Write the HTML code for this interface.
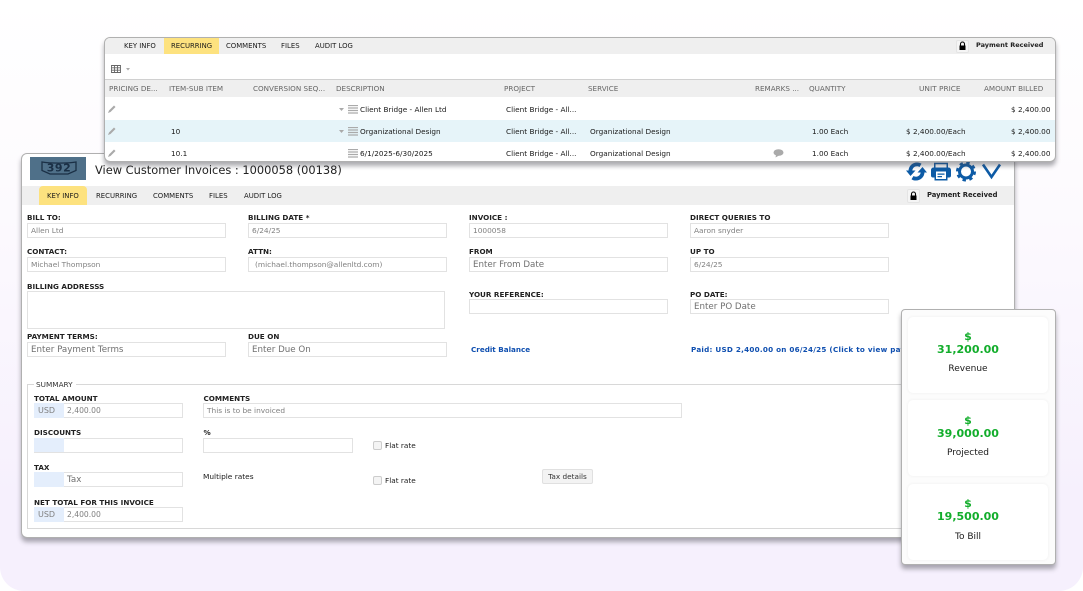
<!DOCTYPE html>
<html><head><meta charset="utf-8"><style>
html,body{margin:0;padding:0;background:#fff}
#r{position:relative;width:1083px;height:591px;overflow:hidden;background:#fff;font-family:"DejaVu Sans","Liberation Sans",sans-serif;font-size:7.3px;color:#1a1a1a}
#bg{position:absolute;left:0;top:0;width:1083px;height:591px;border-radius:0 0 24px 24px;background:linear-gradient(180deg,#fff 0,#fdfbfe 30%,#f6f0fd 85%,#f6f0fd 100%)}
.p{position:absolute;background:#fff;border:1px solid #b0b0b0;box-sizing:border-box;box-shadow:0 4px 5px rgba(70,70,80,.45)}
.a{position:absolute}
.t{position:absolute;white-space:nowrap;line-height:10px}
.tab{font-size:6.9px}
.b{font-weight:bold;font-size:7.2px;color:#222}
.h{color:#666;font-size:7.2px}
.f{position:absolute;box-sizing:border-box;border:1px solid #e2e2e2;background:#fff;height:15px;color:#808080;font-size:7.4px;line-height:14px;padding-left:3px;white-space:nowrap;overflow:hidden}
.f.l{font-size:8.7px;color:#707070}
.u{position:absolute;background:#e4eefc;font-size:8px}
.g{font-weight:bold;color:#12ad2b;font-size:11px;text-align:center;line-height:13px;position:absolute;width:100px}
.c{position:absolute;left:6px;width:140px;height:76px;background:#fff;border-radius:5px;box-shadow:0 0 3px rgba(0,0,0,.06)}
.ck{position:absolute;width:9px;height:9px;box-sizing:border-box;border:1px solid #ccc;border-radius:2px;background:#f4f4f4}
.m{font-size:9px;text-align:center;width:100px;color:#1a1a1a}
</style></head><body><div id="r"><div id="bg"></div>

<!-- invoice panel -->
<div class="p" style="left:21px;top:153px;width:994px;height:385px;border-radius:6px">
<div class="a" style="left:8px;top:3px;width:56px;height:23px;background:#4f7089"></div>
<svg class="a" style="left:19px;top:7px" width="36" height="14" viewBox="0 0 36 14"><path d="M1 1C10 2.500 26 2.500 35 1V9.500L27 13H9L1 9.500Z" fill="none" stroke="#1a2f45" stroke-width="1.300"/><text x="18" y="10.500" font-size="11" font-weight="bold" text-anchor="middle" fill="#1a2f45" font-family="DejaVu Sans" letter-spacing=".5">392</text></svg>
<div class="t" style="left:73px;top:10px;font-size:11.4px;line-height:13px;color:#222">View Customer Invoices : 1000058 (00138)</div>
<div class="a" style="left:0;top:32px;width:992px;height:19px;background:#efefef"></div>
<div class="a" style="left:17px;top:32px;width:48px;height:19px;background:#fde27f;border-radius:4px 4px 0 0"></div>
<div class="t tab" style="left:25px;top:37px">KEY INFO</div>
<div class="t tab" style="left:74px;top:37px">RECURRING</div>
<div class="t tab" style="left:131px;top:37px">COMMENTS</div>
<div class="t tab" style="left:187px;top:37px">FILES</div>
<div class="t tab" style="left:222px;top:37px">AUDIT LOG</div>
<svg class="a" style="left:884px;top:8px" width="100" height="20" viewBox="0 0 100 20">
<g fill="#0d5ba6">
<path id="s" d="M1.500 9C1.500 4 5.500.5 10 .5C12 .5 13.500 1 14.500 1.800L12.500 5C11.500 4.500 10.800 4.300 10 4.300C7.500 4.300 5.700 6 5.300 8.500H8.500L3.500 14 -1 8.500H1.500Z" transform="translate(1 0)"/>
<path d="M1.500 9C1.500 4 5.500.5 10 .5C12 .5 13.500 1 14.500 1.800L12.500 5C11.500 4.500 10.800 4.300 10 4.300C7.500 4.300 5.700 6 5.300 8.500H8.500L3.500 14 -1 8.500H1.500Z" transform="rotate(180 10 9.500)"/>
<path d="M28 5.500V.8H42V5.500H40.500V2.300H29.500V5.500Z"/>
<path d="M27.500 5.500H42.500A2.500 2.500 0 0 1 45 8V13.500A2 2 0 0 1 43 15.500H41.500V18.500H28.500V15.500H27A2 2 0 0 1 25 13.500V8A2.500 2.500 0 0 1 27.500 5.500Z"/>
<path d="M30 9.500H40V17H30Z" fill="#fff"/>
<path d="M31.500 11.500H38.500V12.800H31.500ZM31.500 14H36V15.200H31.500Z"/>
</g>
<circle cx="60" cy="9.500" r="6.500" fill="none" stroke="#0d5ba6" stroke-width="3"/>
<circle cx="60" cy="9.500" r="8.800" fill="none" stroke="#0d5ba6" stroke-width="2.400" stroke-dasharray="3.400 3.510"/>
<path d="M77 2.500L85.500 15 94 2.500" fill="none" stroke="#0d5ba6" stroke-width="2.600"/>
</svg>
<div class="a" style="left:885px;top:35px;width:13px;height:14px;background:#f5f5f5;border:1px solid #e4e4e4;box-sizing:border-box;border-radius:2px"></div>
<svg class="a" style="left:887px;top:37px" width="9" height="10" viewBox="0 0 9 10"><path d="M2.500 4.500V3a2 2 0 0 1 4 0V4.500" fill="none" stroke="#000" stroke-width="1.100"/><rect x="1.500" y="4.500" width="6" height="4.500" fill="#000"/></svg>
<div class="t b" style="left:905px;top:36px;font-size:6.8px">Payment Received</div>

<div class="t b" style="left:5px;top:59px">BILL TO:</div><div class="f" style="left:5px;top:69px;width:199px">Allen Ltd</div>
<div class="t b" style="left:226px;top:59px">BILLING DATE *</div><div class="f" style="left:226px;top:69px;width:199px">6/24/25</div>
<div class="t b" style="left:447px;top:59px">INVOICE :</div><div class="f" style="left:447px;top:69px;width:199px">1000058</div>
<div class="t b" style="left:668px;top:59px">DIRECT QUERIES TO</div><div class="f" style="left:668px;top:69px;width:199px">Aaron snyder</div>

<div class="t b" style="left:5px;top:93px">CONTACT:</div><div class="f" style="left:5px;top:103px;width:199px">Michael Thompson</div>
<div class="t b" style="left:226px;top:93px">ATTN:</div><div class="f" style="left:226px;top:103px;width:199px;padding-left:6px">(michael.thompson@allenltd.com)</div>
<div class="t b" style="left:447px;top:93px">FROM</div><div class="f l" style="left:447px;top:103px;width:199px">Enter From Date</div>
<div class="t b" style="left:668px;top:93px">UP TO</div><div class="f" style="left:668px;top:103px;width:199px">6/24/25</div>

<div class="t b" style="left:5px;top:128px">BILLING ADDRESSS</div>
<div class="f" style="left:5px;top:137px;width:418px;height:38px"></div>
<div class="t b" style="left:447px;top:136px">YOUR REFERENCE:</div><div class="f" style="left:447px;top:145px;width:199px"></div>
<div class="t b" style="left:668px;top:136px">PO DATE:</div><div class="f l" style="left:668px;top:145px;width:199px">Enter PO Date</div>

<div class="t b" style="left:5px;top:178px">PAYMENT TERMS:</div><div class="f l" style="left:5px;top:188px;width:199px">Enter Payment Terms</div>
<div class="t b" style="left:226px;top:178px">DUE ON</div><div class="f l" style="left:226px;top:188px;width:199px">Enter Due On</div>
<div class="t b" style="left:449px;top:191px;color:#0f4fb0">Credit Balance</div>
<div class="t b" style="left:669px;top:191px;color:#0f4fb0;letter-spacing:.25px">Paid: USD 2,400.00 on 06/24/25 (Click to view payment)</div>

<!-- summary -->
<div class="a" style="left:5px;top:230px;width:983px;height:145px;box-sizing:border-box;border:1px solid #d8d8d8"></div>
<div class="t" style="left:12px;top:226px;background:#fff;padding:0 3px 0 2px;color:#333">SUMMARY</div>
<div class="t b" style="left:12px;top:240px">TOTAL AMOUNT</div>
<div class="f" style="left:12px;top:249px;width:149px;padding-left:32px;font-size:7.6px">2,400.00</div><div class="u" style="left:12px;top:249px;width:30px;height:15px;color:#808080;line-height:15px;text-indent:4px">USD</div>
<div class="t b" style="left:181.500px;top:240px">COMMENTS</div>
<div class="f" style="left:181px;top:249px;width:479px">This is to be invoiced</div>
<div class="t b" style="left:12px;top:274px">DISCOUNTS</div>
<div class="f" style="left:12px;top:284px;width:149px"></div><div class="u" style="left:12px;top:284px;width:30px;height:14px"></div>
<div class="t b" style="left:181.500px;top:274px">%</div>
<div class="f" style="left:181px;top:284px;width:150px"></div>
<div class="ck" style="left:351px;top:287px"></div><div class="t" style="left:363px;top:287px">Flat rate</div>
<div class="t b" style="left:12px;top:309px">TAX</div>
<div class="f l" style="left:12px;top:318px;width:149px;padding-left:32px">Tax</div><div class="u" style="left:12px;top:318px;width:30px;height:15px"></div>
<div class="t" style="left:181px;top:318px;font-size:7.4px">Multiple rates</div>
<div class="ck" style="left:351px;top:322px"></div><div class="t" style="left:363px;top:322px">Flat rate</div>
<div class="a" style="left:520px;top:315px;width:51px;height:15px;box-sizing:border-box;background:#f3f3f3;border:1px solid #e0e0e0;border-radius:2px;text-align:center;line-height:13px;color:#333">Tax details</div>
<div class="t b" style="left:12px;top:344px">NET TOTAL FOR THIS INVOICE</div>
<div class="f" style="left:12px;top:353px;width:149px;padding-left:32px;font-size:7.6px">2,400.00</div><div class="u" style="left:12px;top:353px;width:30px;height:15px;color:#808080;line-height:15px;text-indent:4px">USD</div>
</div>

<!-- top panel -->
<div class="p" style="left:104px;top:37px;width:952px;height:125px;border-radius:6px;overflow:hidden">
<div class="a" style="left:0;top:0;width:950px;height:16px;background:#efefef"></div>
<div class="a" style="left:59px;top:0;width:55px;height:16px;background:#fde27f"></div>
<div class="t tab" style="left:19px;top:3px">KEY INFO</div>
<div class="t tab" style="left:66px;top:3px">RECURRING</div>
<div class="t tab" style="left:121px;top:3px">COMMENTS</div>
<div class="t tab" style="left:176px;top:3px">FILES</div>
<div class="t tab" style="left:210px;top:3px">AUDIT LOG</div>
<div class="a" style="left:851px;top:2px;width:13px;height:13px;background:#f5f5f5;border:1px solid #e4e4e4;box-sizing:border-box;border-radius:2px"></div>
<svg class="a" style="left:853px;top:3px" width="9" height="10" viewBox="0 0 9 10"><path d="M2.500 4.500V3a2 2 0 0 1 4 0V4.500" fill="none" stroke="#000" stroke-width="1.100"/><rect x="1.500" y="4.500" width="6" height="4.500" fill="#000"/></svg>
<div class="t b" style="left:871px;top:2px;font-size:6.500px">Payment Received</div>
<svg class="a" style="left:6px;top:26px" width="26" height="10" viewBox="0 0 26 10"><path d="M.5 1.500h9v7h-9zM.5 3.800h9M.5 6.200h9M3.500 1.500v7M6.500 1.500v7" fill="none" stroke="#666" stroke-width=".9"/><path d="M15 4h4l-2 2.500z" fill="#aaa"/></svg>
<div class="a" style="left:0;top:41px;width:950px;height:18px;background:#efefef;border-top:1px solid #d0d0d0;box-sizing:border-box"></div>
<div class="a" style="left:0;top:82px;width:950px;height:22px;background:#e6f4f9"></div>
<div class="t h" style="left:4px;top:46px">PRICING DE...</div>
<div class="t h" style="left:64px;top:46px">ITEM-SUB ITEM</div>
<div class="t h" style="left:148px;top:46px">CONVERSION SEQ...</div>
<div class="t h" style="left:231px;top:46px">DESCRIPTION</div>
<div class="t h" style="left:399px;top:46px">PROJECT</div>
<div class="t h" style="left:483px;top:46px">SERVICE</div>
<div class="t h" style="left:650px;top:46px">REMARKS ...</div>
<div class="t h" style="left:704px;top:46px">QUANTITY</div>
<div class="t h" style="left:814px;top:46px;font-size:7.4px">UNIT PRICE</div>
<div class="t h" style="left:879px;top:46px">AMOUNT BILLED</div>

<svg class="a" style="left:2px;top:66px" width="10" height="10" viewBox="0 0 10 10"><path d="M1 9l1-2.500 5-5 1.500 1.500-5 5z" fill="#aaa"/></svg>
<svg class="a" style="left:2px;top:88px" width="10" height="10" viewBox="0 0 10 10"><path d="M1 9l1-2.500 5-5 1.500 1.500-5 5z" fill="#aaa"/></svg>
<svg class="a" style="left:2px;top:110px" width="10" height="10" viewBox="0 0 10 10"><path d="M1 9l1-2.500 5-5 1.500 1.500-5 5z" fill="#aaa"/></svg>

<svg class="a" style="left:234px;top:67px" width="20" height="9" viewBox="0 0 20 9"><path d="M0 3h5L2.500 6z" fill="#aaa"/><path d="M9 .5h10M9 3h10M9 5.500h10M9 8h10" stroke="#aaa" stroke-width="1.200"/></svg>
<svg class="a" style="left:234px;top:89px" width="20" height="9" viewBox="0 0 20 9"><path d="M0 3h5L2.500 6z" fill="#aaa"/><path d="M9 .5h10M9 3h10M9 5.500h10M9 8h10" stroke="#aaa" stroke-width="1.200"/></svg>
<svg class="a" style="left:234px;top:111px" width="20" height="9" viewBox="0 0 20 9"><path d="M9 .5h10M9 3h10M9 5.500h10M9 8h10" stroke="#aaa" stroke-width="1.200"/></svg>

<div class="t" style="left:255px;top:67px">Client Bridge - Allen Ltd</div>
<div class="t" style="left:401px;top:67px">Client Bridge - All...</div>
<div class="t" style="left:906px;top:67px">$ 2,400.00</div>

<div class="t" style="left:66px;top:89px">10</div>
<div class="t" style="left:255px;top:89px">Organizational Design</div>
<div class="t" style="left:401px;top:89px">Client Bridge - All...</div>
<div class="t" style="left:485px;top:89px">Organizational Design</div>
<div class="t" style="left:707px;top:89px">1.00 Each</div>
<div class="t" style="left:801px;top:89px">$ 2,400.00/Each</div>
<div class="t" style="left:906px;top:89px">$ 2,400.00</div>

<div class="t" style="left:66px;top:111px">10.1</div>
<div class="t" style="left:255px;top:111px">6/1/2025-6/30/2025</div>
<div class="t" style="left:401px;top:111px">Client Bridge - All...</div>
<div class="t" style="left:485px;top:111px">Organizational Design</div>
<svg class="a" style="left:668px;top:111px" width="11" height="9" viewBox="0 0 11 9"><ellipse cx="5.500" cy="3.500" rx="5" ry="3.300" fill="#aaa"/><path d="M3 6l-.5 2.500L6 6.500z" fill="#aaa"/></svg>
<div class="t" style="left:707px;top:111px">1.00 Each</div>
<div class="t" style="left:801px;top:111px">$ 2,400.00/Each</div>
<div class="t" style="left:906px;top:111px">$ 2,400.00</div>
</div>

<!-- right panel -->
<div class="p" style="left:901px;top:309px;width:155px;height:256px;border-radius:4px;background:#fcfcfc">
<div class="c" style="top:7px"></div><div class="c" style="top:90px"></div><div class="c" style="top:174px"></div>
<div class="g" style="left:16px;top:20px">$<br>31,200.00</div>
<div class="t m" style="left:16px;top:54px">Revenue</div>
<div class="g" style="left:16px;top:104px">$<br>39,000.00</div>
<div class="t m" style="left:16px;top:138px">Projected</div>
<div class="g" style="left:16px;top:187px">$<br>19,500.00</div>
<div class="t m" style="left:16px;top:222px">To Bill</div>
</div>
</div></body></html>
